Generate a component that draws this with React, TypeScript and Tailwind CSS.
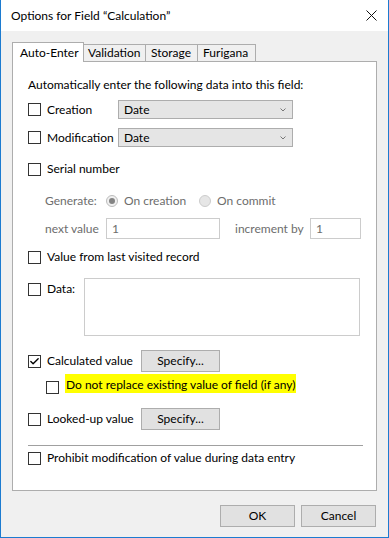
import { Check } from "lucide-react";

const font = "font-['Segoe_UI',Lato,sans-serif]";

const Box = ({ checked = false }: { checked?: boolean }) => (
  <span className="w-[13px] h-[13px] shrink-0 border border-[#333333] bg-white flex items-center justify-center">
    {checked && <Check size={11} strokeWidth={3} className="text-black" />}
  </span>
);

const Dropdown = () => (
  <div className="w-[175px] h-[19px] border border-[#adadad] bg-[#e5e5e5] flex items-center justify-between pl-[5px] pr-[6px]">
    <span className="text-black">Date</span>
    <svg width="6" height="4" viewBox="0 0 6 4">
      <path d="M0.5 0.5 L3 3 L5.5 0.5" fill="none" stroke="#777" strokeWidth="1" />
    </svg>
  </div>
);

const Btn = ({ label, w }: { label: string; w: string }) => (
  <div className={`${w} h-[22px] border border-[#adadad] bg-[#e1e1e1] flex items-center justify-center text-black`}>
    {label}
  </div>
);

export default function App() {
  return (
    <div className={`${font} text-[12px] leading-[16px] w-[389px] h-[538px] bg-[#f0f0f0] border-x border-b border-[#1c7bd0] flex flex-col text-black`}>
      {/* title bar */}
      <div className="h-[31px] bg-white flex items-center justify-between pl-[10px] pr-[11px] shrink-0">
        <span className="text-black">Options for Field “Calculation”</span>
        <svg width="11" height="11" viewBox="0 0 11 11">
          <path d="M0.5 0.5 L10.5 10.5 M10.5 0.5 L0.5 10.5" stroke="#111" strokeWidth="1" />
        </svg>
      </div>

      <div className="px-[11px] flex flex-col">
        {/* tabs */}
        <div className="mt-[11px] flex items-end h-[20px] relative z-10">
          <div className="w-[72px] h-[20px] bg-white border-x border-t border-[#adadad] pl-[7px] pt-[2px]">Auto-Enter</div>
          <div className="w-[62px] h-[18px] bg-[#f0f0f0] border-r border-t border-b border-[#adadad] pl-[4px]">Validation</div>
          <div className="w-[52px] h-[18px] bg-[#f0f0f0] border-r border-t border-b border-[#adadad] pl-[5px]">Storage</div>
          <div className="w-[58px] h-[18px] bg-[#f0f0f0] border-r border-t border-b border-[#adadad] pl-[5px]">Furigana</div>
        </div>

        {/* panel */}
        <div className="-mt-px h-[430px] bg-white border border-[#adadad] flex flex-col pl-[15px]">
          <div className="mt-[15px]">Automatically enter the following data into this field:</div>

          <div className="mt-[7px] h-[19px] flex items-center">
            <Box />
            <span className="ml-[6px] w-[71px]">Creation</span>
            <Dropdown />
          </div>
          <div className="mt-[9px] h-[19px] flex items-center">
            <Box />
            <span className="ml-[6px] w-[71px]">Modification</span>
            <Dropdown />
          </div>

          <div className="mt-[14px] flex items-center">
            <Box />
            <span className="ml-[6px]">Serial number</span>
          </div>

          <div className="mt-[16px] flex items-center pl-[17px] text-[#6d6d6d]">
            <span className="w-[61px]">Generate:</span>
            <span className="w-[12px] h-[12px] rounded-full border border-[#bcbcbc] bg-[#f0f0f0] flex items-center justify-center">
              <span className="w-[6px] h-[6px] rounded-full bg-[#838383]" />
            </span>
            <span className="ml-[6px] w-[75px]">On creation</span>
            <span className="w-[12px] h-[12px] rounded-full border border-[#cccccc] bg-[#e6e6e6]" />
            <span className="ml-[6px]">On commit</span>
          </div>

          <div className="mt-[9px] h-[21px] flex items-center pl-[17px] text-[#6d6d6d]">
            <span className="w-[61px]">next value</span>
            <div className="w-[114px] h-[21px] border border-[#cccccc] bg-white pl-[5px] flex items-center">1</div>
            <span className="ml-[15px] w-[75px]">increment by</span>
            <div className="w-[51px] h-[21px] border border-[#cccccc] bg-white pl-[5px] flex items-center">1</div>
          </div>

          <div className="mt-[10px] flex items-center">
            <Box />
            <span className="ml-[6px]">Value from last visited record</span>
          </div>

          <div className="mt-[13px] flex items-start">
            <span className="mt-[5px]">
              <Box />
            </span>
            <span className="ml-[6px] mt-[3px] w-[37px]">Data:</span>
            <div className="w-[276px] h-[58px] border border-[#cccccc] bg-white" />
          </div>

          <div className="mt-[14px] h-[22px] flex items-center">
            <Box checked />
            <span className="ml-[6px] w-[94px]">Calculated value</span>
            <Btn label="Specify..." w="w-[79px]" />
          </div>

          <div className="mt-[2px] flex items-start pl-[18px]">
            <span className="mt-[7px]">
              <Box />
            </span>
            <span className="ml-[6px] h-[19px] pt-[3px] pl-px pr-px bg-[#ffff00]">
              Do not replace existing value of field (if any)
            </span>
          </div>

          <div className="mt-[14px] h-[22px] flex items-center">
            <Box />
            <span className="ml-[6px] w-[94px]">Looked-up value</span>
            <Btn label="Specify..." w="w-[79px]" />
          </div>

          <div className="mt-[15px] h-px w-[335px] bg-[#a0a0a0]" />

          <div className="mt-[4px] flex items-center">
            <Box />
            <span className="ml-[6px]">Prohibit modification of value during data entry</span>
          </div>
        </div>

        {/* buttons */}
        <div className="mt-[14px] flex justify-end gap-[6px] pr-px">
          <Btn label="OK" w="w-[75px]" />
          <Btn label="Cancel" w="w-[75px]" />
        </div>
      </div>
    </div>
  );
}
